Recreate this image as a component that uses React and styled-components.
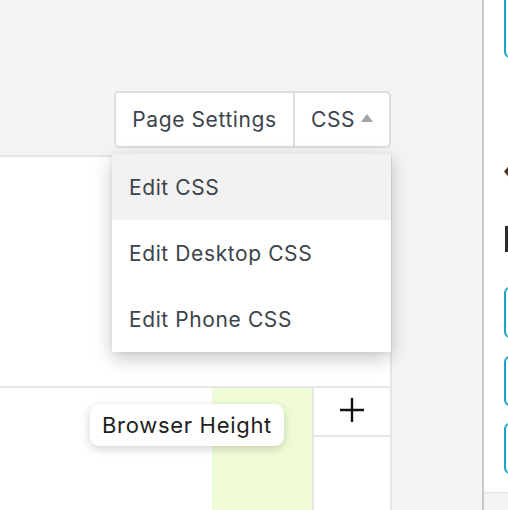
import React from 'react'
import styled, { createGlobalStyle } from 'styled-components'

const GlobalStyle = createGlobalStyle`
  html, body {
    margin: 0;
    padding: 0;
    overflow: hidden;
    background: #ffffff;
  }
  * {
    box-sizing: border-box;
  }
`

const menuItems = ['Edit CSS', 'Edit Desktop CSS', 'Edit Phone CSS']

const App = () => {
  return (
    <>
      <GlobalStyle />
      <Page>
        <Main>
          <Header>
            <ToolbarWrap>
              <Toolbar>
                <ToolButton $width={177}>Page Settings</ToolButton>
                <ToolButton $width={96} $divider>
                  CSS
                  <Caret />
                </ToolButton>
              </Toolbar>
              <Menu>
                {menuItems.map((item, i) => (
                  <MenuItem key={item} $active={i === 0}>{item}</MenuItem>
                ))}
              </Menu>
            </ToolbarWrap>
          </Header>

          <Canvas>
            <UpperSection />
            <BottomRow>
              <EmptyCell />
              <GreenCell />
              <PlusColumn>
                <PlusCell>
                  <svg width="26" height="26" viewBox="0 0 26 26">
                    <path d="M13 1v24M1 13h24" stroke="#111" strokeWidth="2.4" fill="none" />
                  </svg>
                </PlusCell>
                <EmptyPlusCell />
              </PlusColumn>
              <Tooltip>Browser Height</Tooltip>
            </BottomRow>
          </Canvas>
        </Main>

        <Sidebar>
          <SideBox $top={-6} $height={64} />
          <Chevron>‹</Chevron>
          <DarkBar />
          <SideBox $top={35} $height={51} />
          <SideBox $top={18} $height={50} />
          <SideBox $top={17} $height={51} />
          <SideFooter />
        </Sidebar>
      </Page>
    </>
  )
}

export default App

const Page = styled.div`
  display: flex;
  width: 508px;
  height: 510px;
  font-family: Inter, "Noto Sans", "Liberation Sans", sans-serif;
`

const Main = styled.div`
  width: 484px;
  flex-shrink: 0;
  display: flex;
  flex-direction: column;
  background: #f4f4f4;
  border-right: 2px solid #c9c9cd;
`

const Header = styled.div`
  height: 155px;
  display: flex;
  align-items: flex-start;
  padding-top: 91px;
  padding-left: 114px;
`

const ToolbarWrap = styled.div`
  position: relative;
`

const Toolbar = styled.div`
  display: flex;
  height: 57px;
  background: #ffffff;
  border: 2px solid #dddddf;
  border-radius: 5px;
`

const ToolButton = styled.div`
  display: flex;
  align-items: center;
  justify-content: center;
  width: ${(p) => p.$width}px;
  font-size: 21px;
  letter-spacing: 0.6px;
  color: #3c434a;
  border-left: ${(p) => (p.$divider ? '2px solid #dddddf' : 'none')};
`

const Caret = styled.span`
  margin-left: 6px;
  margin-top: -3px;
  width: 0;
  height: 0;
  border-left: 6.5px solid transparent;
  border-right: 6.5px solid transparent;
  border-bottom: 8px solid #a2a2a2;
`

const Menu = styled.div`
  position: absolute;
  top: 63px;
  left: -2px;
  width: 279px;
  background: #ffffff;
  box-shadow: 0 6px 18px rgba(0, 0, 0, 0.22), 0 1px 4px rgba(0, 0, 0, 0.06);
  z-index: 5;
`

const MenuItem = styled.div`
  height: 66px;
  display: flex;
  align-items: center;
  padding-left: 17px;
  font-size: 21px;
  letter-spacing: 0.6px;
  color: #3c434a;
  background: ${(p) => (p.$active ? '#f2f2f2' : '#ffffff')};
`

const Canvas = styled.div`
  flex: 1;
  width: 392px;
  display: flex;
  flex-direction: column;
  background: #ffffff;
  border-top: 2px solid #e6e6e6;
  border-right: 2px solid #e6e6e6;
`

const UpperSection = styled.div`
  height: 231px;
  border-bottom: 2px solid #e6e6e6;
`

const BottomRow = styled.div`
  position: relative;
  flex: 1;
  display: flex;
`

const EmptyCell = styled.div`
  width: 212px;
`

const GreenCell = styled.div`
  width: 100px;
  background: #effcd6;
`

const PlusColumn = styled.div`
  flex: 1;
  display: flex;
  flex-direction: column;
  border-left: 2px solid #e6e6e6;
  padding-top: 1px;
`

const PlusCell = styled.div`
  height: 48px;
  display: flex;
  align-items: center;
  justify-content: center;
  border-bottom: 2px solid #e6e6e6;
  padding-bottom: 4px;
`

const EmptyPlusCell = styled.div`
  flex: 1;
`

const Tooltip = styled.div`
  position: absolute;
  top: 16px;
  left: 90px;
  width: 194px;
  height: 42px;
  display: flex;
  align-items: center;
  justify-content: center;
  background: #ffffff;
  border-radius: 9px;
  box-shadow: 0 3px 10px rgba(0, 0, 0, 0.18);
  font-size: 22px;
  letter-spacing: 0.7px;
  color: #1e1e1e;
  z-index: 4;
`

const Sidebar = styled.div`
  flex: 1;
  display: flex;
  flex-direction: column;
  padding-left: 20px;
  background: #ffffff;
  position: relative;
`

const SideBox = styled.div`
  margin-top: ${(p) => p.$top}px;
  height: ${(p) => p.$height}px;
  width: 40px;
  border: 2px solid #1ba3cc;
  border-radius: 6px;
  flex-shrink: 0;
`

const Chevron = styled.div`
  margin-top: 100px;
  margin-left: -1px;
  height: 26px;
  line-height: 26px;
  font-size: 24px;
  font-weight: 700;
  color: #333;
`

const DarkBar = styled.div`
  margin-top: 42px;
  margin-left: 1px;
  width: 10px;
  height: 26px;
  background: #2a2a2a;
  flex-shrink: 0;
`

const SideFooter = styled.div`
  position: absolute;
  left: 0;
  right: 0;
  bottom: 0;
  height: 18px;
  background: #f4f4f4;
  border-top: 1px solid #e4e4e4;
`
